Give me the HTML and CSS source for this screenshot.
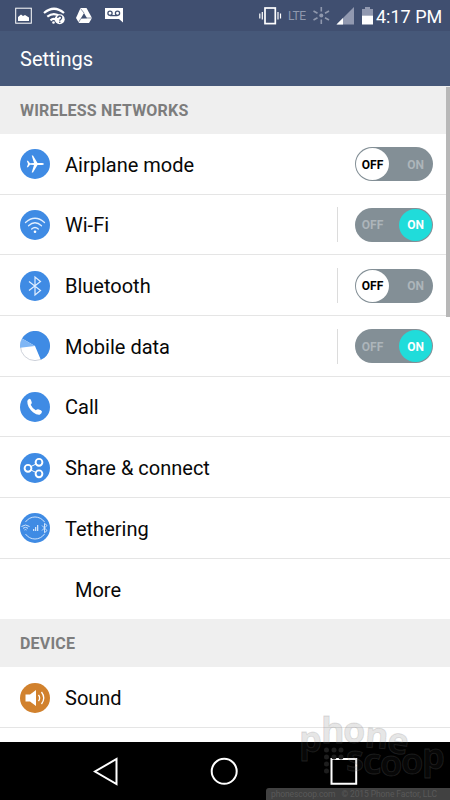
FILE: index.html
```html
<!DOCTYPE html>
<html lang="en">
<head>
<meta charset="utf-8">
<title>Settings</title>
<link rel="stylesheet" href="styles.css">
</head>
<body>
<div class="phone">
  <header class="status">
    <svg class="status-left" width="130" height="31" viewBox="0 0 130 31">
      <g fill="none" stroke="#fff">
        <rect x="15.7" y="8.2" width="15.6" height="15"/>
        <path stroke-width="2.200" d="M44 13q10-8.500 20 0M47.300 16.700q6.700-5.300 13 0"/>
        <path stroke-width="2.200" d="M50.500 20.300q3-2.500 6-.3"/>
      </g>
      <path fill="#fff" d="M18 21v-4l3-2.500 2 1.500 2-1 4 2.500V21z"/>
      <circle cx="53.500" cy="22.500" r="1.300" fill="#fff"/>
      <circle cx="59.700" cy="19.300" r="5" fill="#fff"/>
      <path d="M57.800 18q0-2 2-2t1.800 2q0 1-1.700 2v.7" fill="none" stroke="#404f70" stroke-width="1.300"/>
      <circle cx="59.800" cy="22.300" r=".8" fill="#404f70"/>
      <path fill="#fff" d="M80.500 8h6l5.500 10-3 5H79l-3-5z"/>
      <path fill="#404f70" d="m84 13 3 5.300h-6z"/>
      <path d="m80.500 8.500 3.500 4.500M92 18h-5l-6 .3-2.500 4.200" fill="none" stroke="#404f70" stroke-width=".6"/>
      <path fill="#fff" d="M105 8h18v14.500l-4-3.500h-14z"/>
      <g fill="none" stroke="#404f70" stroke-width="1.300"><circle cx="110" cy="13.300" r="2.100"/><circle cx="117.500" cy="13.300" r="2.100"/><path d="M110 15.600h7.500"/></g>
    </svg>
    <div class="status-right">
      <svg width="117" height="31" viewBox="258 0 117 31">
        <g fill="none" stroke="#fff" stroke-width="1.700"><rect x="265" y="8" width="10.300" height="15.600"/><path stroke-width="1.200" d="M262.300 12v7.500M259.800 13.500v5M278 12v7.500M280.500 13.500v5"/></g>
        <text class="lte" x="288" y="20" textLength="18">LTE</text>
        <circle cx="321.300" cy="15.500" r="2" fill="#8f98ad"/>
        <path fill="none" stroke="#8f98ad" stroke-width="1.600" d="M321.300 7v4.500M321.300 19.500V24M313.500 11l4 2.300M325 17.700l4 2.300M313.500 20l4-2.300M325 13.300l4-2.300"/>
        <path fill="#9199b0" d="M354 7v17.500h-17.500z"/><path fill="#fff" d="M343 18v6.500h-6.500z"/>
        <path fill="#9199b0" d="M362 9h3V7h5v2h3v6.500h-11z"/><path fill="#fff" d="M362 15.500h11v9h-11z"/>
      </svg>
      <span class="time">4:17 PM</span>
    </div>
  </header>
  <div class="appbar">Settings</div>
  <main>
    <h2 class="section">WIRELESS NETWORKS</h2>
    <ul class="list">
      <li class="row">
        <svg class="icon" viewBox="0 0 30 30"><circle cx="15" cy="15" r="15" fill="#3f8be4"/><path fill="#fff" d="M24 15q-.5-1.100-2-1.100h-4.500L13 6.500h-1.300l2.300 7.500-4 .2L8 11.700H6.800L8 15l-1.200 3.300H8l2-2.500 4 .2-2.300 7.500H13l4.500-7.400H22q1.500 0 2-1.100z"/></svg>
        <span class="label">Airplane mode</span>
        <span class="toggle"><b class="opt active">OFF</b><b class="opt">ON</b></span>
      </li>
      <li class="row">
        <svg class="icon" viewBox="0 0 30 30"><circle cx="15" cy="15" r="15" fill="#3f8be4"/><g fill="none" stroke="#e2efff" stroke-width="1.300" stroke-linecap="round"><path d="M5.500 12.500q9.500-8.500 19 0M8.500 15.800q6.500-6 13 0M11.700 19q3.300-3 6.600 0"/></g><circle cx="15" cy="21.800" r="1.300" fill="#fff"/></svg>
        <span class="label">Wi-Fi</span><i class="divider"></i>
        <span class="toggle on"><b class="opt">OFF</b><b class="opt active">ON</b></span>
      </li>
      <li class="row">
        <svg class="icon" viewBox="0 0 30 30"><circle cx="15" cy="15" r="15" fill="#3f8be4"/><path d="M9 10.500 20.500 19.500 15 24V6l5.500 4.500L9 19.500" fill="none" stroke="#e2efff" stroke-width="1.200"/></svg>
        <span class="label">Bluetooth</span><i class="divider"></i>
        <span class="toggle"><b class="opt active">OFF</b><b class="opt">ON</b></span>
      </li>
      <li class="row">
        <svg class="icon" viewBox="0 0 30 30"><circle cx="15" cy="15" r="14.600" fill="#fff" stroke="#b9bfca" stroke-width=".7"/><path fill="#3f8be4" d="M15 15 2 7.500A15 15 0 1 1 20.800 28.800z"/><path fill="#7fb6f5" d="M15 15 2 7.500A15 15 0 0 0 .1 16.800z"/></svg>
        <span class="label">Mobile data</span><i class="divider"></i>
        <span class="toggle on"><b class="opt">OFF</b><b class="opt active">ON</b></span>
      </li>
      <li class="row">
        <svg class="icon" viewBox="0 0 30 30"><circle cx="15" cy="15" r="15" fill="#3f8be4"/><path fill="#fff" d="M7.300 9q.5-2 2.500-2.200 1.200.2 2 3.700 0 1.200-1.100 2.200 1.700 3.800 5.100 5.500 1.400-1.200 2.400-1 3.500 1 3.800 2.300 0 2-2.300 3.200-2.700.5-6.700-2.500-5.900-5-5.700-11.200z"/></svg>
        <span class="label">Call</span>
      </li>
      <li class="row">
        <svg class="icon" viewBox="0 0 30 30"><circle cx="15" cy="15" r="15" fill="#3f8be4"/><g fill="none" stroke="#fff" stroke-width="1.900"><path stroke-width="1" d="m11 13.500 5-2.500M11 17l5 2.500"/><circle cx="8" cy="15.300" r="3.400"/><circle cx="19" cy="9.300" r="3.400"/><circle cx="19" cy="20.800" r="3.400"/></g></svg>
        <span class="label">Share &amp; connect</span>
      </li>
      <li class="row">
        <svg class="icon" viewBox="0 0 30 30"><circle cx="15" cy="15" r="15" fill="#3f8be4"/><g fill="none" stroke="#cfe3fb" stroke-width="1"><path d="M5.500 9a11.500 11.500 0 0 1 19 0M5.500 21a11.500 11.500 0 0 0 19 0"/><path d="M1.500 13.500q4-3 8 0M3 15.300q2.500-2 5 0M4.500 17q1-.8 2 0M22 12.500l5 5-2.500 2.300v-9.500l2.500 2.200-5 5"/></g><path fill="#cfe3fb" d="M13 18v-2h1.300v2zM15 18v-4h1.300v4zM17 18v-6h1.300v6z"/></svg>
        <span class="label">Tethering</span>
      </li>
      <li class="row more"><span class="label">More</span></li>
    </ul>
    <h2 class="section device">DEVICE</h2>
    <ul class="list">
      <li class="row">
        <svg class="icon" viewBox="0 0 30 30"><circle cx="15" cy="15" r="15" fill="#d1812d"/><path fill="#fff" d="M5.500 11.500H10l6-4.500v16l-6-4.500H5.500z"/><path fill="none" stroke="#fff" stroke-width="1.300" d="M18.500 11.800q2.300 3.200 0 6.400M21.500 9q4.500 6 0 12"/></svg>
        <span class="label">Sound</span>
      </li>
    </ul>
  </main>
  <nav class="nav">
    <svg width="450" height="58" viewBox="0 742 450 58" fill="none" stroke="#fff" stroke-width="2">
      <path d="M116.500 759v25L95 771.500z"/><circle cx="224.200" cy="771.300" r="12.500"/><path d="M331.500 759h24.700v24.700h-24.700z"/>
    </svg>
  </nav>
  <i class="scrollbar"></i>
  <svg class="watermark" width="160" height="90" viewBox="290 710 160 90">
    <g class="mark">
      <text x="299" y="752">p</text><text x="321" y="743">h</text><text x="343" y="743">o</text><text x="364" y="747" transform="rotate(5 364 747)">n</text><text x="386" y="752" transform="rotate(8 386 752)">e</text>
      <text x="346" y="771">s</text><text x="363" y="774">c</text><text x="380" y="776">o</text><text x="401" y="774">o</text><text x="422" y="769">p</text>
    </g>
    <g fill="none" stroke="#1e1e1e"><path stroke-width="5" stroke-linecap="round" stroke-dasharray="0 7" d="M326.500 750v22M334 750v8M341 750v8"/></g>
  </svg>
  <div class="credit">phonescoop.com &nbsp; © 2015 Phone Factor, LLC</div>
</div>
</body>
</html>
```
FILE: styles.css
```css
* { box-sizing: border-box; }
body { margin: 0; background: #fff; font-family: Roboto, "Liberation Sans", sans-serif; }
.phone { position: relative; width: 450px; height: 800px; overflow: hidden; display: flex; flex-direction: column; background: #fff; }
.status { height: 31px; flex: none; display: flex; justify-content: space-between; background: #404f70; }
.status-right { display: flex; align-items: center; width: 192px; }
.lte { font-size: 12px; fill: #8f98ad; }
.time { color: #fff; font-size: 18px; line-height: 31px; white-space: nowrap; padding-top: 2px; margin-left: 1px; }
.appbar { height: 55px; flex: none; background: #465879; color: #fff; font-size: 20px; line-height: 57px; padding-left: 20px; }
main { flex: 1; min-height: 0; overflow: hidden; }
.section { margin: 0; height: 48px; padding-left: 20px; background: #efefef; color: #7d7d7d; font-size: 16px; font-weight: 700; line-height: 50px; letter-spacing: .2px; }
.list { margin: 0; padding: 0; list-style: none; }
.row { height: 60.67px; padding: 1px 17px 0 20px; display: flex; align-items: center; border-bottom: 1px solid #e5e5e5; }
.row.more { border-bottom: 0; padding-left: 75px; }
.row.more .label { margin-left: 0; }
.icon { width: 30px; height: 30px; flex: none; }
.label { flex: 1; margin-left: 15px; color: #080808; font-size: 20px; line-height: 30px; padding-top: 1px; }
.divider { width: 1px; height: 35px; background: #dcdcdc; margin-right: 17px; }
.toggle { width: 78px; height: 34px; border-radius: 17px; padding: 1px; background: #838f96; display: flex; justify-content: space-between; align-items: center; }
.opt { width: 33px; height: 32px; display: flex; align-items: center; justify-content: center; font-size: 12px; line-height: 32px; padding-top: 1px; color: #adb5ba; }
.opt.active { border-radius: 50%; background: #fff; color: #000; }
.on .opt.active { background: #20dcda; color: #fff; }
.nav { height: 58px; flex: none; background: #000; }
.nav svg { display: block; }
.scrollbar { position: absolute; right: 0; top: 87px; width: 4px; height: 230px; background: #b8b8b8; }
.watermark { position: absolute; right: 0; bottom: 0; }
.mark { font-family: "Open Sans", sans-serif; font-size: 36px; font-weight: 700; fill: rgba(60, 60, 60, .12); stroke: rgba(120, 120, 120, .22); stroke-width: 1px; }
.credit { position: absolute; right: 0; bottom: 0; width: 184px; height: 12px; border-radius: 3px 0 0 0; background: #414141; color: #595959; font-size: 8.500px; line-height: 12px; padding-left: 5px; white-space: nowrap; overflow: hidden; letter-spacing: -.1px; }
```
